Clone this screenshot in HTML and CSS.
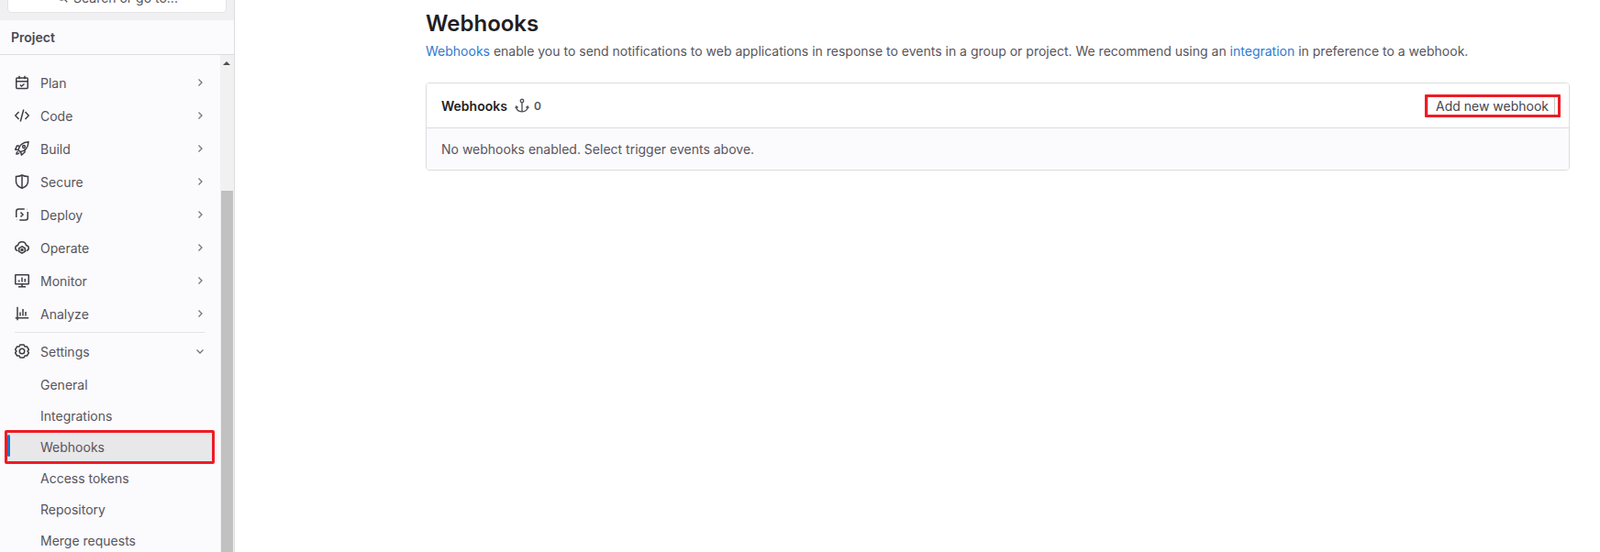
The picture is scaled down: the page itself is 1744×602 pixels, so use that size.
FILE: index.html
```html
<!DOCTYPE html>
<html lang="en">
<head>
  <meta charset="UTF-8" />
  <title>Webhooks</title>
  <link rel="stylesheet" href="styles.css">
</head>
<body>

  <aside class="sidebar">
    <div class="search-wrap">
      <div class="search-box">
        <svg class="search-icon" viewBox="0 0 16 16"><circle cx="7" cy="7" r="4.5"/><path d="M10.5 10.5 14 14"/></svg>
        Search or go to...
      </div>
    </div>
    <div class="project-title">Project</div>

    <div class="nav-scroll">
      <nav class="nav">
        <a class="nav-item">
          <svg class="icon" viewBox="0 0 16 16"><rect x="1.750" y="3" width="12.500" height="11.500" rx="1"/><path d="M2 6.750h12M5 .75v3.500M11 .75v3.500M6 10.500l1.500 1.500L10.500 9.500"/></svg>
          <span>Plan</span>
          <svg class="chevron" viewBox="0 0 12 12"><path d="m4.500 2.500 3.500 3.500-3.500 3.500"/></svg>
        </a>
        <a class="nav-item">
          <svg class="icon" viewBox="0 0 16 16"><path d="M4.500 4 .75 8l3.750 4M11.500 4l3.750 4-3.750 4M9.750 1.500l-3.500 13"/></svg>
          <span>Code</span>
          <svg class="chevron" viewBox="0 0 12 12"><path d="m4.500 2.500 3.500 3.500-3.500 3.500"/></svg>
        </a>
        <a class="nav-item">
          <svg class="icon" viewBox="0 0 16 16"><path d="M6 11.500 4 9.500C4.500 5 8.500 1 15 .75c-.2 6.500-4 10.500-9 10.750Z"/><path d="M5 5H2.500L.75 9l3.250.5M11 8.500V12l-3.500 3-1-3.500M3.500 11c-1 .7-1.500 2-1.500 3 1 0 2.500-.5 3-1.500"/><circle cx="10" cy="6" r="1.400"/></svg>
          <span>Build</span>
          <svg class="chevron" viewBox="0 0 12 12"><path d="m4.500 2.500 3.500 3.500-3.500 3.500"/></svg>
        </a>
        <a class="nav-item">
          <svg class="icon" viewBox="0 0 16 16"><path d="M8 1c2 1 4.500 1.500 6.500 1.500V8c0 3.200-2.700 5.800-6.500 7.200C4.200 13.800 1.500 11.200 1.500 8V2.500C3.500 2.500 6 2 8 1Z"/><path d="M8 1.500V15"/></svg>
          <span>Secure</span>
          <svg class="chevron" viewBox="0 0 12 12"><path d="m4.500 2.500 3.500 3.500-3.500 3.500"/></svg>
        </a>
        <a class="nav-item">
          <svg class="icon" viewBox="0 0 16 16"><path d="M1.750 11V4.500c0-1.500 1-2.500 2.500-2.500h6.500M14.250 5v6.500c0 1.500-1 2.500-2.500 2.500h-6.500M13 2.500h.250M2.750 13.500h.250M6.500 5.500 9 8l-2.500 2.500"/></svg>
          <span>Deploy</span>
          <svg class="chevron" viewBox="0 0 12 12"><path d="m4.500 2.500 3.500 3.500-3.500 3.500"/></svg>
        </a>
        <a class="nav-item">
          <svg class="icon" viewBox="0 0 16 16"><path d="M3.500 11.500C1.800 11.200.75 10 .75 8.500S1.800 5.800 3.500 5.500C4 3.300 5.800 1.750 8 1.750s4 1.550 4.500 3.750c1.700.3 2.750 1.500 2.750 3s-1.050 2.700-2.750 3"/><path d="m8 6.750 3.250 1.900v3.700L8 14.250l-3.250-1.900v-3.700L8 6.750Z"/><circle cx="8" cy="10.500" r="1"/></svg>
          <span>Operate</span>
          <svg class="chevron" viewBox="0 0 12 12"><path d="m4.500 2.500 3.500 3.500-3.500 3.500"/></svg>
        </a>
        <a class="nav-item">
          <svg class="icon" viewBox="0 0 16 16"><rect x=".75" y="1.750" width="14.500" height="10" rx=".5"/><path d="M8 11.750v3M4 14.750h8M4.750 9.500V7.500M8 9.500V4.500M11.250 9.500V6"/></svg>
          <span>Monitor</span>
          <svg class="chevron" viewBox="0 0 12 12"><path d="m4.500 2.500 3.500 3.500-3.500 3.500"/></svg>
        </a>
        <a class="nav-item">
          <svg class="icon" viewBox="0 0 16 16"><path d="M3 .75v14.500M.75 12.750h14.500M6 10.500V6.500M9 10.500V3M12 10.500V6"/></svg>
          <span>Analyze</span>
          <svg class="chevron" viewBox="0 0 12 12"><path d="m4.500 2.500 3.500 3.500-3.500 3.500"/></svg>
        </a>

        <div class="nav-divider"></div>

        <a class="nav-item nav-item-open">
          <svg class="icon" viewBox="0 0 16 16"><path d="M6 .9h4l1.100 2.100 2.300.1 2 3.200L14.100 8l1.300 1.700-2 3.200-2.300.1L10 15.100H6L4.900 13l-2.300-.1-2-3.200L1.900 8 .6 6.300l2-3.200 2.300-.1L6 .9Z"/><circle cx="8" cy="8" r="2.750"/></svg>
          <span>Settings</span>
          <svg class="chevron" viewBox="0 0 12 12"><path d="m2.500 4.500 3.500 3.500 3.500-3.500"/></svg>
        </a>
        <a class="sub-item">General</a>
        <a class="sub-item">Integrations</a>
        <a class="sub-item sub-item-active">Webhooks</a>
        <a class="sub-item">Access tokens</a>
        <a class="sub-item">Repository</a>
        <a class="sub-item">Merge requests</a>
      </nav>

      <div class="scrollbar">
        <div class="scroll-arrow"></div>
        <div class="scroll-thumb"></div>
      </div>
    </div>
  </aside>

  <main class="content">
    <h1 class="page-title">Webhooks</h1>
    <p class="page-desc"><a class="link">Webhooks</a> enable you to send notifications to web applications in response to events in a group or project. We recommend using an <a class="link">integration</a> in preference to a webhook.</p>

    <section class="card">
      <header class="card-header">
        <strong class="card-title">Webhooks</strong>
        <svg class="anchor" viewBox="0 0 16 16"><circle cx="8" cy="3" r="1.750"/><path d="M8 4.750v10M1.750 9c0 3.500 2.500 5.750 6.250 5.750S14.250 12.500 14.250 9M.75 11l1-2 2 1.250M15.250 11l-1-2-2 1.250"/></svg>
        <span class="count">0</span>
        <button class="add-btn">Add new webhook</button>
      </header>
      <div class="card-body">No webhooks enabled. Select trigger events above.</div>
    </section>
  </main>

</body>
</html>
```

FILE: styles.css
```css
html, body {
  height: 100%;
}

body {
  margin: 0;
  background: #fff;
  font-family: 'Inter', 'Liberation Sans', sans-serif;
  font-size: 14px;
  color: #57555c;
  display: flex;
  overflow: hidden;
}

.sidebar {
  width: 256px;
  height: 602px;
  flex-shrink: 0;
  box-sizing: border-box;
  background: #fbfafd;
  border-right: 1px solid #dcdcde;
  display: flex;
  flex-direction: column;
  overflow: hidden;
}

.search-wrap {
  background: #f0f0f2;
  height: 22px;
  padding: 0 9px;
  box-sizing: border-box;
}

.search-box {
  height: 32px;
  margin-top: -19px;
  background: #fff;
  border-radius: 4px;
  box-shadow: 0 0 0 1px #e4e4e7;
  display: flex;
  align-items: center;
  justify-content: center;
  gap: 5px;
  font-size: 14px;
  color: #57555c;
}

.search-icon {
  width: 14px;
  height: 14px;
  fill: none;
  stroke: #57555c;
  stroke-width: 1.5;
}

.project-title {
  height: 38px;
  box-sizing: border-box;
  padding: 10px 12px 0;
  font-size: 14px;
  font-weight: 600;
  line-height: 18px;
  color: #4b4950;
  border-bottom: 1px solid #dcdcde;
}

.nav-scroll {
  flex: 1;
  display: flex;
  min-height: 0;
}

.nav {
  flex: 1;
  padding-top: 12px;
}

.nav-item {
  height: 36px;
  margin-right: 16px;
  padding-left: 16px;
  display: flex;
  align-items: center;
  gap: 12px;
}

.nav-item span {
  flex: 1;
}

.nav-item-open {
  height: 39px;
  box-sizing: border-box;
  padding-top: 1px;
}

.icon {
  width: 16px;
  height: 16px;
  fill: none;
  stroke: #3f3d44;
  stroke-width: 1.5;
  flex-shrink: 0;
}

.chevron {
  width: 12px;
  height: 12px;
  margin-right: 0;
  fill: none;
  stroke: #77757b;
  stroke-width: 1.3;
  flex-shrink: 0;
}

.nav-divider {
  height: 1px;
  margin: 2px 17px 0 16px;
  background: #e4e4e7;
}

.sub-item {
  display: flex;
  align-items: center;
  height: 34px;
  padding-left: 44px;
}

.sub-item-active {
  position: relative;
  height: 37px;
  margin: -1px 6px -2px 5px;
  padding-left: 36px;
  background: #e8e7ea;
  border: 3px solid #ed1c24;
  border-radius: 2px;
  box-sizing: border-box;
}

.sub-item-active::before {
  content: "";
  position: absolute;
  left: 0;
  top: 2px;
  width: 3px;
  height: 24px;
  border-radius: 2px;
  background: #1f75cb;
}

.scrollbar {
  width: 15px;
  flex-shrink: 0;
  background: #f1f1f1;
  display: flex;
  flex-direction: column;
}

.scroll-arrow {
  width: 0;
  height: 0;
  margin: 7px 0 0 3px;
  border-left: 4px solid transparent;
  border-right: 4px solid transparent;
  border-bottom: 4px solid #505050;
}

.scroll-thumb {
  flex: 1;
  margin-top: 137px;
  margin-left: 1px;
  margin-right: 1px;
  background: #c1c1c1;
}

.content {
  flex: 1;
  padding: 11px 33px 0 208px;
  min-width: 0;
}

.page-title {
  margin: 0;
  font-size: 24px;
  font-weight: 600;
  line-height: 29px;
  color: #1f1e24;
}

.page-desc {
  margin: 6px 0 0;
  line-height: 20px;
  white-space: nowrap;
}

.link {
  color: #2f7ad0;
}

.card {
  margin-top: 24px;
  border: 1px solid #dcdcde;
  border-radius: 4px;
  overflow: hidden;
}

.card-header {
  height: 49px;
  box-sizing: border-box;
  padding: 0 9px 0 16px;
  background: #fff;
  border-bottom: 1px solid #dcdcde;
  display: flex;
  align-items: center;
}

.card-title {
  font-size: 14px;
  font-weight: 600;
  color: #1f1e24;
}

.anchor {
  width: 16px;
  height: 16px;
  margin-left: 8px;
  fill: none;
  stroke: #57555c;
  stroke-width: 1.4;
}

.count {
  margin-left: 5px;
  font-size: 12px;
  font-weight: 600;
}

.add-btn {
  position: relative;
  margin-left: auto;
  width: 148px;
  height: 25px;
  padding: 0 0 0 9px;
  box-sizing: border-box;
  background: #fff;
  border: 3px solid #ed1c24;
  border-radius: 1px;
  box-shadow: inset 1px 0 0 #c9c9cc;
  font-family: inherit;
  font-size: 14px;
  color: #47454c;
  text-align: left;
  line-height: 19px;
}

/* edge of the real button, showing inside the red mark */
.add-btn::after {
  content: "";
  position: absolute;
  top: 0;
  bottom: 0;
  right: 3px;
  width: 1px;
  background: #c9c9cc;
}

.card-body {
  height: 45px;
  box-sizing: border-box;
  padding: 0 16px;
  background: #fbfafd;
  display: flex;
  align-items: center;
}
```
